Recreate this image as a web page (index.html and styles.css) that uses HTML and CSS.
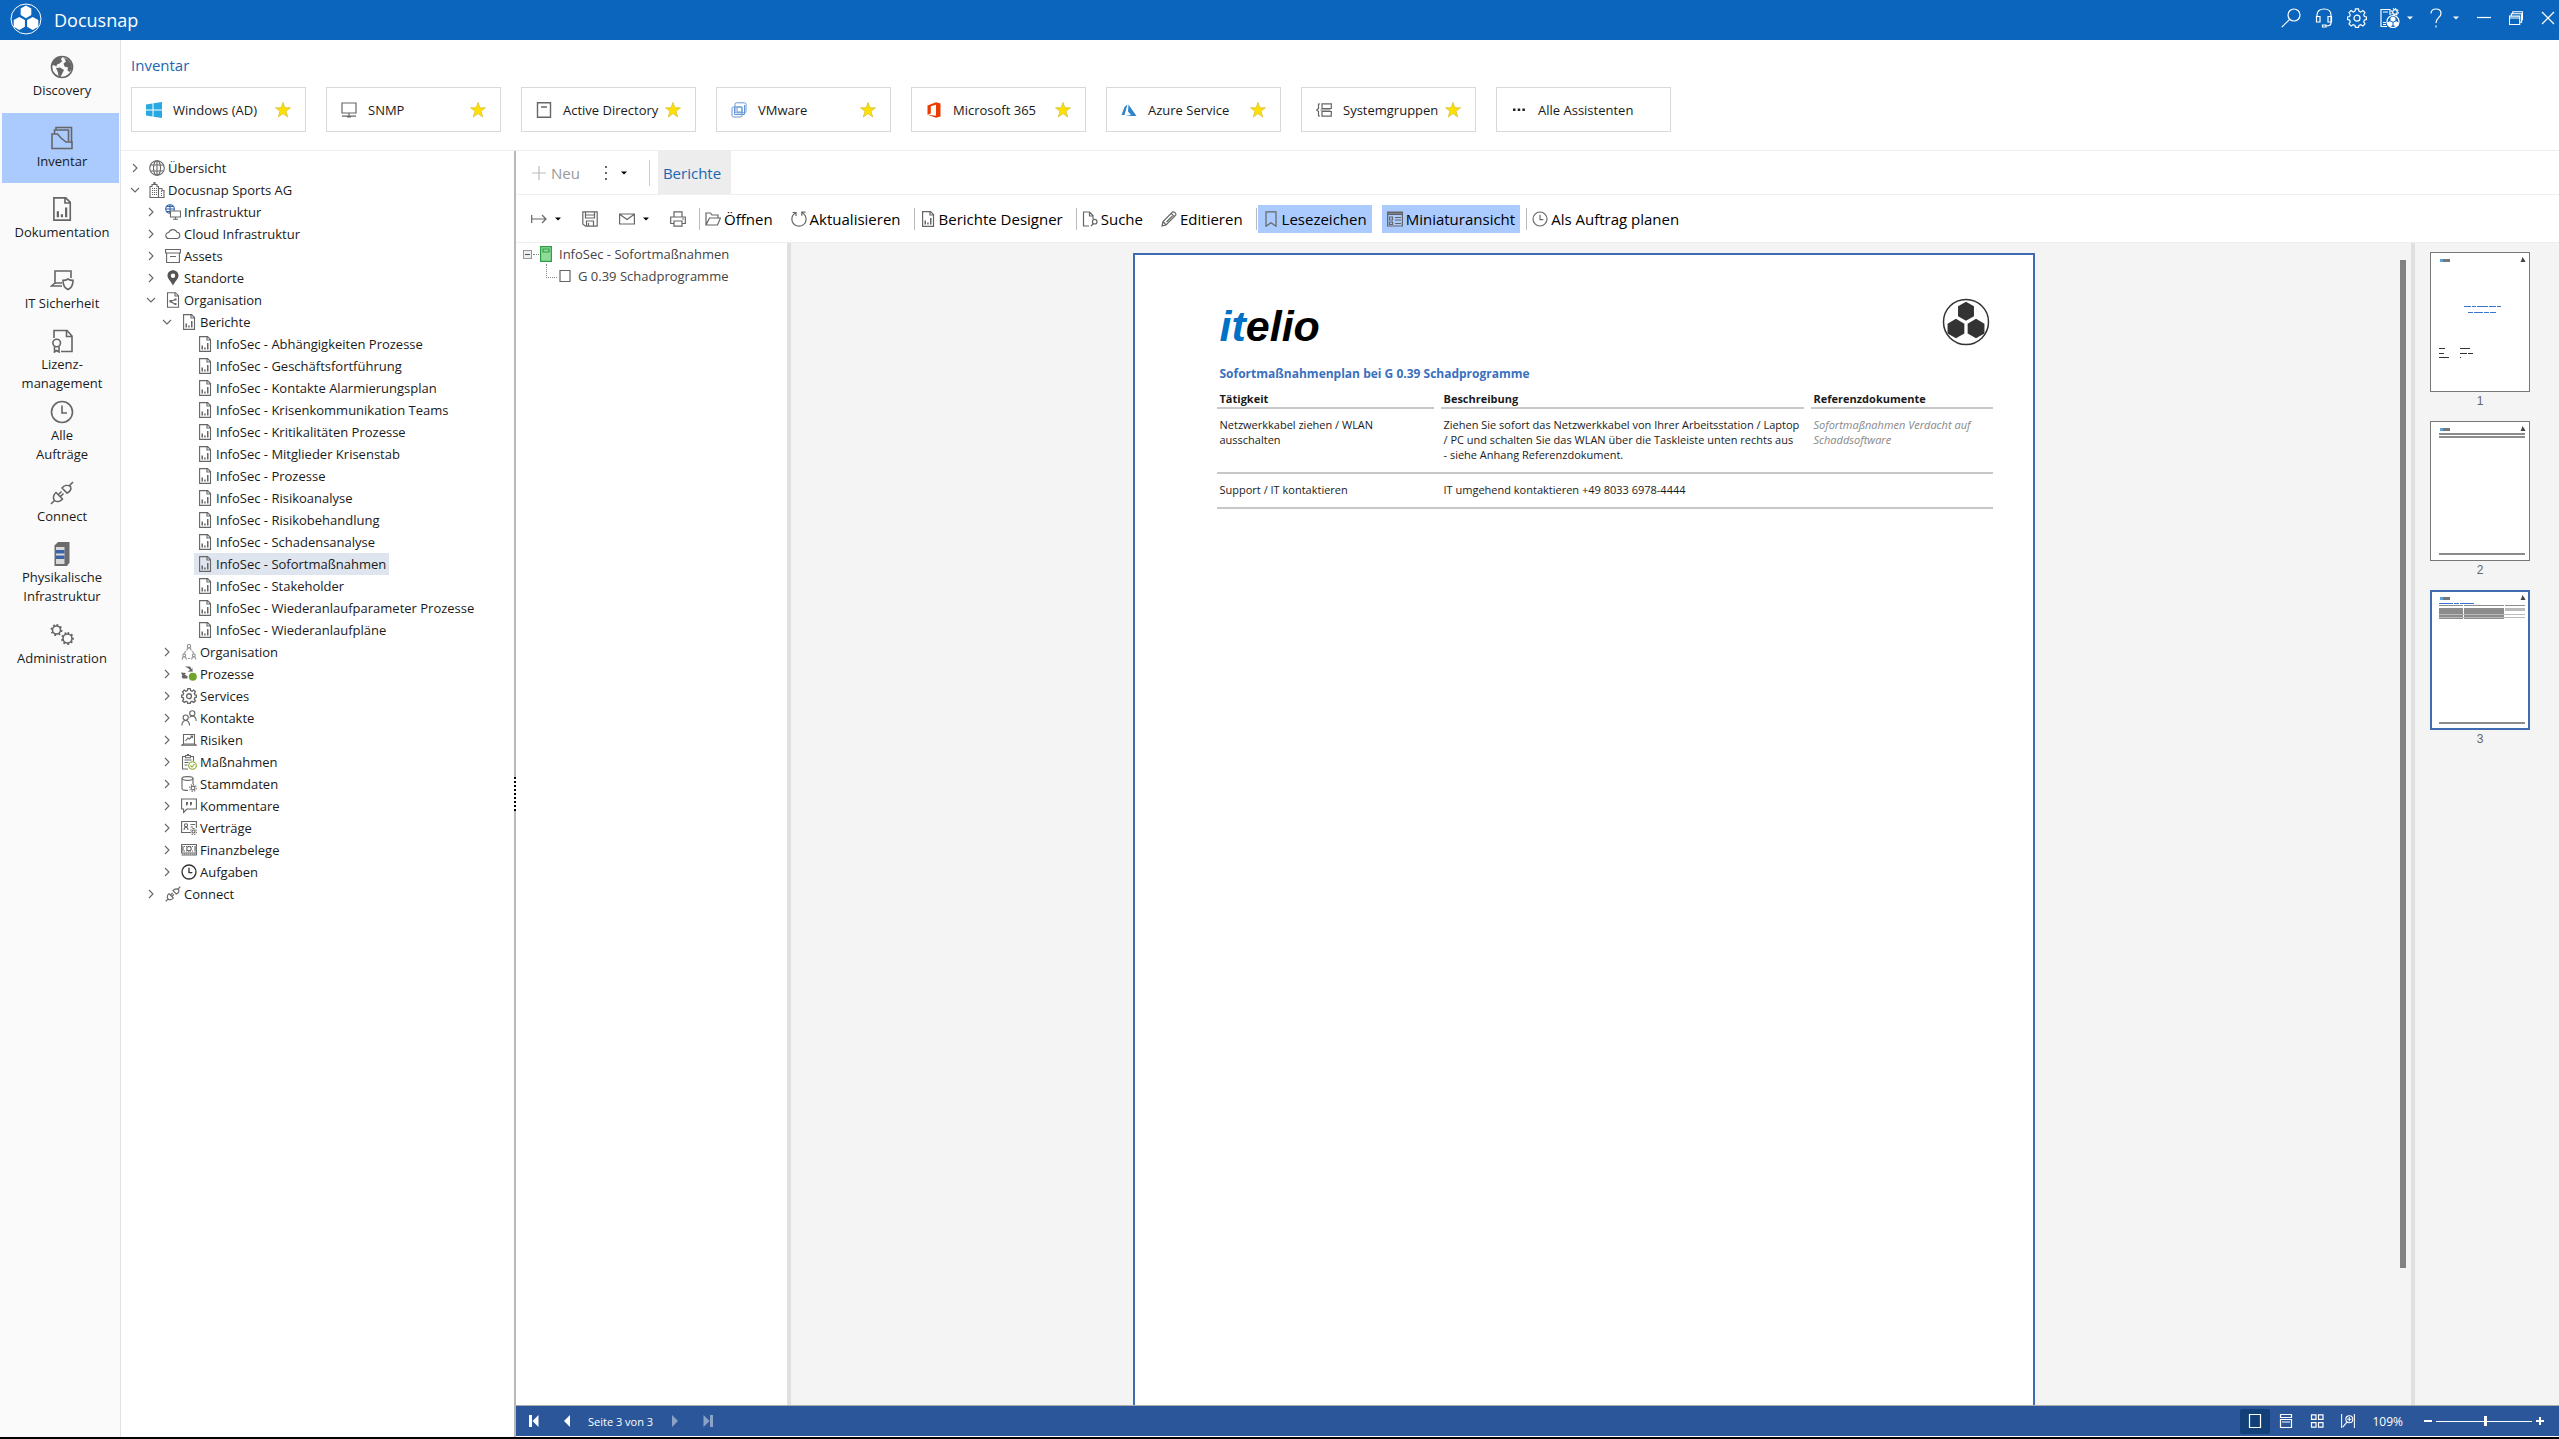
FILE: index.html
```html
<!DOCTYPE html>
<html lang="de">
<head>
    <meta charset="UTF-8">
    <meta name="viewport" content="width=device-width, initial-scale=1.0">
    <title>Docusnap</title>
    <link rel="stylesheet" href="styles.css">
</head>
<body>
    <!-- Icon sprite -->
    <svg class="sprite" aria-hidden="true">
        <symbol id="i-hex" viewBox="0 0 32 32"><circle cx="16" cy="16" r="15" fill="none" stroke="currentColor" stroke-width="1"/><path fill="currentColor" d="M16 2.500l5.300 3v6.600L16 15.200l-5.300-3.100V5.500zM9.300 13.900l5.600 3.200v6.600l-5.600 3.200-5.600-3.200v-6.600zM22.700 13.900l5.600 3.200v6.600l-5.600 3.200-5.600-3.200v-6.600z"/></symbol>
        <symbol id="i-chev" viewBox="0 0 10 10"><path d="M3 1l4 4-4 4"/></symbol>
        <symbol id="i-down" viewBox="0 0 10 10"><path d="M1 3l4 4 4-4"/></symbol>
        <symbol id="i-caret" viewBox="0 0 6 4"><path class="solid" d="M0 0.500h6L3 3.500z"/></symbol>
        <symbol id="i-star" viewBox="0 0 16 16"><path fill="#ffe000" stroke="#d8c13c" stroke-width=".8" d="M8 .5l1.900 5.300h5.600l-4.500 3.400 1.700 5.800L8 11.600 3.300 15 5 9.200.5 5.800h5.600z"/></symbol>
        <symbol id="i-earth" viewBox="0 0 24 24"><circle cx="12" cy="12" r="10.500"/><path class="solid" d="M3 6l4-3.500 5-.5-1 3 1.500 1-3 2.500L7 9.500l-.5 2L3.500 10l-1 1zM6 13l4-.5 4 2.500-1.500 3-2 4-2-.5-.5-4zM14 3l4 1.500L21.500 9l.5 5-2.500 3-2-1.500.5-3-3.500-1-1-3 2.500-2z"/></symbol>
        <symbol id="i-inv" viewBox="0 0 24 24"><path d="M4.500 8V4H6V1.500h15.500V17M6 4h12.500v11M4.500 8H2v14.500h20V16h-6l-5-4-3.500-4z"/></symbol>
        <symbol id="i-report" viewBox="0 0 16 16"><path d="M2.600.6h7.900l3 3v11.800H2.600zM10 .6v3.400h3.500"/><path class="solid" d="M4.500 9.500H6V13.500H4.500zM7.200 11.500h1.500v2H7.200zM10 7h1.500v6.500H10z"/></symbol>
        <symbol id="i-itsec" viewBox="0 0 24 24"><path d="M5 15V3h16v7M5 15l-3.500 3H12M5 15h7M18 11c1.500 1 3 1.400 5 1.400 0 5-1.500 7.500-5 9.100-3.500-1.600-5-4.100-5-9.100 2 0 3.500-.4 5-1.400z"/></symbol>
        <symbol id="i-lic" viewBox="0 0 24 24"><path d="M4 9V1.500h13L22 7v15.500H11M16.500 2v5.500H22M4.500 17.500V23l2-1.500L9 23v-5.500"/><circle cx="6.700" cy="14" r="3.800"/></symbol>
        <symbol id="i-clock" viewBox="0 0 24 24"><circle cx="12" cy="12" r="10.500"/><path d="M12 5.500v7.500h5"/></symbol>
        <symbol id="i-plug" viewBox="0 0 24 24"><path d="M1 23l3.500-3.500M19.500 4.500L23 1M12 7l5 5c2.500-1 4.800-3.500 3.500-6.500-3-2-6.500-1-8.500 1.500zM6 11.500l6.500 6.500c-2 2.500-5.500 3.500-8 1.500-2-2.500-1-6 1.500-8zM8.500 13.500l3-3M10.500 15.500l3-3"/></symbol>
        <symbol id="i-rack" viewBox="0 0 24 24"><path fill="#6b6b6b" stroke="none" d="M4.500 3.500L8 0h11.500v20.500L17 24H4.500z"/><path fill="#d9d9d9" stroke="none" d="M6 5h8.500v17H6z"/><path fill="#3c64a4" stroke="none" d="M6 8h8.500v3.500H6zM6 13.500h8.500V17H6z"/></symbol>
        <symbol id="i-gears" viewBox="0 0 24 24"><circle cx="6.500" cy="7" r="4"/><circle cx="17.500" cy="15.500" r="4.500"/><path stroke-width="2" stroke-dasharray="1.700 2.200" d="M6.500 2a5 5 0 1 1-.01 0zM17.500 10a5.500 5.500 0 1 1-.01 0z"/></symbol>
        <symbol id="i-globe" viewBox="0 0 16 16"><circle cx="8" cy="8" r="7.300"/><ellipse cx="8" cy="8" rx="3.500" ry="7.300"/><path d="M1.500 5h13M1.500 11h13M8 .7v14.600"/></symbol>
        <symbol id="i-city" viewBox="0 0 16 16"><path d="M1 15.500V4.500h2v-2h2V.5h1v2h2v2h1.500v11zM10 6.500h3v2h2v7h-5"/><path stroke-dasharray="1 1" d="M3.500 6v8M5.500 6v8M7.500 6v8M12.500 9v5"/></symbol>
        <symbol id="i-infra" viewBox="0 0 16 16"><g style="stroke:#2f62ad"><circle cx="5" cy="5" r="4.300"/><path d="M.7 5h8.600M5 .7v8.600M2 2.500h6M2 7.500h6"/></g><path fill="#fff" d="M5.500 7h10v6h-10z"/><path d="M10.500 13v2M8 15.300h5"/></symbol>
        <symbol id="i-cloud" viewBox="0 0 16 16"><path d="M4 12.500a3 3 0 0 1-.3-6 4.500 4.500 0 0 1 8.300-.3 3.200 3.200 0 0 1 .3 6.300z"/></symbol>
        <symbol id="i-box" viewBox="0 0 16 16"><path d="M.6 1.500h14.800V5H.6zM1.600 5v9.500h12.800V5M5 8.500h6"/></symbol>
        <symbol id="i-pin" viewBox="0 0 16 16"><path fill="#555" fill-rule="evenodd" stroke="none" d="M8 .3c3.200 0 5.500 2.300 5.500 5.200C13.500 9 10 11 8 15.800 6 11 2.500 9 2.500 5.500 2.500 2.600 4.800.3 8 .3zM8 3.500a2.200 2.200 0 1 0 0 4.400 2.200 2.200 0 0 0 0-4.400z"/></symbol>
        <symbol id="i-share" viewBox="0 0 16 16"><path d="M2.500.7h8l3 3v11.600h-11zM10 1v3h3M5.500 9.500l5-2M5.500 9.500l5 3"/><path class="solid" d="M4.500 8h2.500v2.500H4.500zM9.500 6.500h2v2h-2zM9.500 11h2v2h-2z"/></symbol>
        <symbol id="i-org" viewBox="0 0 16 16"><g opacity=".7"><circle cx="8" cy="2.200" r="1.700"/><path d="M5.700 6.500L6.700 4h2.600l1 2.500M1 15.500L2 13h2.500l1 2.500M10.500 15.500l1-2.500H14l1 2.500M5 7l-2 2.500M11 7l2 2.500M7 14.500h2"/><circle cx="3.200" cy="11.300" r="1.400"/><circle cx="12.800" cy="11.300" r="1.400"/></g></symbol>
        <symbol id="i-proc" viewBox="0 0 16 16"><path class="solid" d="M4 .5h5l2 3V.8l.8 4.700-5 .3L9 4 7.500 2.500zM0 6.500l5 .5-1.300 1.500L6 10H1.500zM.5 10h6v2.500h-5z"/><circle cx="11.800" cy="10.800" r="4" fill="#6fa52c" stroke="none"/></symbol>
        <symbol id="i-gear" viewBox="0 0 20 20"><path d="M8.500.8h3l.5 2.400 1.800.8 2.100-1.400L18 4.700l-1.300 2.100.7 1.700 2 .5v2.600l-2 .5-.7 1.800L18 16l-2.100 2.100-2.100-1.400-1.800.8-.5 1.900h-3L8 17.500l-1.800-.8-2.100 1.400L2 16l1.300-2.100-.7-1.800-2-.5V9l2-.5.7-1.700L2 4.700l2.100-2.100L6.200 4 8 3.200z"/><circle cx="10" cy="10.200" r="3"/></symbol>
        <symbol id="i-people" viewBox="0 0 16 16"><circle cx="11.300" cy="3.300" r="2.600"/><circle cx="4.700" cy="7.600" r="2.600"/><path d="M.8 15.500c.3-3.500 1.700-5 3.900-5s3.600 1.500 3.900 5M8.500 7.500c.7-1 1.700-1.500 2.800-1.500 2.200 0 3.600 1.500 4 5"/></symbol>
        <symbol id="i-risk" viewBox="0 0 16 16"><path d="M2.500 12V2.500h11V12M.5 13.300h15L13.500 12h-11zM4.500 9l2.500-3 1.500 1L11.500 4M9.500 4h2v2"/></symbol>
        <symbol id="i-clip" viewBox="0 0 16 16"><path d="M7 15H1.500V2.500h3v-1h2V.5h1v1h2v1h3V7M4.500 2.500v1.300h5V2.500M3.500 6h7M3.500 8.500h4M3.500 11h3"/><g style="stroke:#86ab1f"><circle cx="11.500" cy="11.500" r="3.800" fill="#fff"/><path d="M9.500 11.500l1.500 1.500 2.500-3"/></g></symbol>
        <symbol id="i-db" viewBox="0 0 16 16"><ellipse cx="6.500" cy="2.500" rx="5.500" ry="1.900"/><path d="M1 2.500v10c0 1.300 2 2 6 2M12 2.500V8"/><circle cx="12" cy="12" r="1.900"/><path stroke-dasharray="1.200 1.400" d="M12 8.600a3.400 3.400 0 1 1-.01 0z"/></symbol>
        <symbol id="i-comment" viewBox="0 0 16 16"><path d="M.6 1h14.800v10H6l-3.400 3.500V11h-2z"/><path class="solid" d="M5 4h2v2L6 7.500H5zM9 4h2v2l-1 1.500H9z"/></symbol>
        <symbol id="i-contract" viewBox="0 0 16 16"><path d="M9 12.500H.6V1.500h14.800V8M9.500 4.500H14M9.500 7H12M3 10c.2-2 .8-2.800 2-2.800S6.800 8 7 10"/><circle cx="5" cy="5.300" r="1.600"/><circle cx="12.500" cy="11.500" r="1.500"/><path stroke-dasharray="1.200 1.200" d="M12.500 8.500a3 3 0 1 1-.01 0z"/></symbol>
        <symbol id="i-money" viewBox="0 0 16 16"><path d="M.6 2.500h14.800V11H.6zM.6 13h14.800V11M2 4v5.500M14 4v5.500"/><circle cx="8" cy="6.700" r="2.200"/><path stroke-dasharray="1 1" d="M3 4.500h10M3 9h10M1 12h14"/></symbol>
        <symbol id="i-win" viewBox="0 0 16 16"><path fill="#29a9e1" stroke="none" d="M0 2.500l6.500-1v6H0zM7.500 1.300L16 0v7.500H7.500zM0 8.500h6.500v6L0 13.500zM7.500 8.500H16V16l-8.500-1.300z"/></symbol>
        <symbol id="i-pc" viewBox="0 0 16 16"><path d="M1 1h14v10H1zM8 11v3M1 14.200h14M6 15h4"/></symbol>
        <symbol id="i-dir" viewBox="0 0 16 16"><path stroke-width="1.400" d="M1.500.8h13v14.400h-13zM5 5h6"/></symbol>
        <symbol id="i-vm" viewBox="0 0 16 16"><g style="stroke:#6797d3;stroke-width:1"><rect x="4" y=".8" width="11" height="10" rx="1.500"/><rect x="1" y="5" width="10" height="10" rx="1.500"/><path d="M3.500 5v7.500h10V3"/><rect x="6" y="5" width="5" height="5"/></g></symbol>
        <symbol id="i-office" viewBox="0 0 16 16"><path fill="#eb3c00" stroke="none" d="M1.500 3.500L10 .2l4.500 1.300v13L10 15.800l-8.500-3.100 8.500 1V2.800L4.800 4.200v7.300l-3.300 1.200z"/></symbol>
        <symbol id="i-azure" viewBox="0 0 16 16"><path fill="#2f86c8" stroke="none" d="M6.500 2.500L3.500 5 .5 13h3zM7.500 2.500L15.500 14H4.500l5.500-1-3-3.500z"/></symbol>
        <symbol id="i-sysgrp" viewBox="0 0 16 16"><path d="M4 2H2.500v4.500L.7 8l1.800 1.500V14H4M6 1.800h9.300V6.500H6zM6 9.500h9.300v4.700H6zM4.500 8h10"/></symbol>
        <symbol id="i-dots" viewBox="0 0 16 16"><path fill="#222" stroke="none" d="M2 6.500h2.500V9H2zM6.700 6.500h2.500V9H6.700zM11.400 6.500h2.500V9h-2.500z"/></symbol>
        <symbol id="i-plus" viewBox="0 0 16 16"><path d="M8 1v14M1 8h14"/></symbol>
        <symbol id="i-vdots" viewBox="0 0 4 16"><path class="solid" d="M1 1h2v2H1zM1 7h2v2H1zM1 13h2v2H1z"/></symbol>
        <symbol id="i-export" viewBox="0 0 16 16"><path d="M.7 4v8M1 8h14M11 4l4 4-4 4"/></symbol>
        <symbol id="i-save" viewBox="0 0 16 16"><path d="M.8.8h14.400v14.400H3.500L.8 13zM3.500 1v6h9V1M4.500 15v-5h7v5M3.500 4h9M6.500 12v3"/></symbol>
        <symbol id="i-mail" viewBox="0 0 16 16"><path d="M.6 3h14.800v10H.6zM1 3.500l7 5 7-5"/></symbol>
        <symbol id="i-print" viewBox="0 0 16 16"><path d="M4 6V.8h8V6M4 12.500H.7V6h14.600v6.500H12M4 10h8v5.200H4zM12 8h2"/></symbol>
        <symbol id="i-open" viewBox="0 0 16 16"><path d="M1 14V2h4.500L7 4h6v3M1 14l3.500-7H15.500L12.500 14z"/></symbol>
        <symbol id="i-refresh" viewBox="0 0 16 16"><path d="M4.500 2A7 7 0 0 0 5.500 14.700M10.500 14.700A7 7 0 0 0 10.800 1.700M5 14.500q3 1.200 6 0M1.500 1.500h3.500V5M14.500 1.200h-3.700v3.500"/></symbol>
        <symbol id="i-find" viewBox="0 0 16 16"><path d="M7 15H1.500V1h6l3.500 3.500V8M7.500 1v4H11M9 15l2.500-2.500"/><circle cx="12.700" cy="10.700" r="2.300"/></symbol>
        <symbol id="i-edit" viewBox="0 0 16 16"><path d="M1 15l1-4.500L11.500 1c1.500-.8 4 1.500 3.200 3.200L5 14zM10.200 2.300l3.300 3.300M2 10.500L5 14M11.500 5l-6 6"/></symbol>
        <symbol id="i-mark" viewBox="0 0 12 16"><path d="M1 .8h10v14.400l-5-3.500-5 3.500z"/></symbol>
        <symbol id="i-mini" viewBox="0 0 16 16"><path d="M.6 1h14.800v14H.6zM1 3.500h14M8 6.500h6M8 9h6M8 12.500h6M2.500 6h3v3h-3zM2.500 11h3v2.500h-3zM1 2.200h14"/></symbol>
        <symbol id="i-search" viewBox="0 0 20 20"><circle cx="13" cy="7" r="6"/><path d="M8.500 11.500L.8 19.200"/></symbol>
        <symbol id="i-headset" viewBox="0 0 20 20"><path d="M3 9V7c0-4 3-6 7-6s7 2 7 6v8c0 2-2 3-5 3M2.500 8.500H6V14H2.500zM14 8.500h3.500V14H14zM8.500 17h3.500v2H8.500z"/></symbol>
        <symbol id="i-tool" viewBox="0 0 20 20"><path d="M7 18.500H1V1.500h9V7M3 4h5M3 14.500h3M3 16.500h3"/><circle cx="15" cy="4" r="2.300"/><path stroke-dasharray="1.300 1.300" d="M15 .6a3.400 3.400 0 1 1-.01 0z"/><circle cx="13" cy="13.500" r="6"/><path class="solid" d="M13 8.500l2.500 1.300v2.700L13 13.800l-2.500-1.300V9.800zM9.900 13.200l2.600 1.400v2.700L9.900 18.700l-2.600-1.400v-2.700zM16.100 13.200l2.600 1.400v2.700l-2.600 1.400-2.600-1.400v-2.700z"/></symbol>
        <symbol id="i-help" viewBox="0 0 12 20"><path d="M1 5.500C1 2.500 3 1 6 1s5 1.700 5 4.500C11 9.500 6 9.500 6 15M6 17.500v2"/></symbol>
        <symbol id="i-min" viewBox="0 0 14 14"><path d="M0 6.500h14"/></symbol>
        <symbol id="i-restore" viewBox="0 0 15 15"><path d="M.5 5.500h11v9H.5zM.5 7.500h11M2.500 5V3h11v9H12M4 3V.8h10.500V10"/></symbol>
        <symbol id="i-close" viewBox="0 0 14 14"><path d="M1 1l12 12M13 1L1 13"/></symbol>
        <symbol id="i-first" viewBox="0 0 12 12"><path class="solid" d="M1 0h3v12H1zM10.500 0v12L4.500 6z"/></symbol>
        <symbol id="i-prev" viewBox="0 0 12 12"><path class="solid" d="M9 0v12L3 6z"/></symbol>
        <symbol id="i-next" viewBox="0 0 12 12"><path class="solid" d="M3 0v12l6-6z"/></symbol>
        <symbol id="i-last" viewBox="0 0 12 12"><path class="solid" d="M8 0h3v12H8zM1.500 0v12l6-6z"/></symbol>
        <symbol id="i-v1" viewBox="0 0 14 14"><path d="M1.500.5h11v13h-11z"/></symbol>
        <symbol id="i-v2" viewBox="0 0 14 14"><path d="M1.500.5h11v3h-11zM1.500 5.500h11v8h-11zM3 8h8"/></symbol>
        <symbol id="i-v3" viewBox="0 0 14 14"><path d="M1.500.8H6v4.500H1.500zM8.500.8H13v4.500H8.500zM1.500 8.700H6v4.500H1.500zM8.500 8.700H13v4.500H8.500z"/></symbol>
        <symbol id="i-v4" viewBox="0 0 16 16"><path d="M.7 0v16M15.300 0v16M2 15l5-6M9.500 3.500v5M7 6h5"/><circle cx="9.500" cy="6" r="4"/></symbol>
        <symbol id="i-book" viewBox="0 0 12 16"><path fill="#8edc9a" stroke="#2f9e44" d="M.6.6h10.800v14.800H.6zM3 3h6v3H3z"/></symbol>
        <symbol id="i-sheet" viewBox="0 0 12 16"><path d="M1 2.500h10v11H1z"/></symbol>
        <symbol id="m-head" viewBox="0 0 98 138"><path stroke="#5aa3dc" stroke-width="3" d="M9 7.500h3"/><path stroke="#777" stroke-width="3" d="M12 7.500h7"/><path fill="#444" d="M91.500 4l2 3 1 2h-5l1-2z"/></symbol>
    </svg>

    <header class="titlebar">
        <svg class="logo"><use href="#i-hex"/></svg>
        <span class="app-name">Docusnap</span>
        <nav class="window-tools">
            <button aria-label="Suchen"><svg><use href="#i-search"/></svg></button>
            <button aria-label="Support"><svg><use href="#i-headset"/></svg></button>
            <button aria-label="Einstellungen"><svg><use href="#i-gear"/></svg></button>
            <button class="has-caret" aria-label="Werkzeuge"><svg><use href="#i-tool"/></svg><svg class="caret"><use href="#i-caret"/></svg></button>
            <button class="has-caret" aria-label="Hilfe"><svg><use href="#i-help"/></svg><svg class="caret"><use href="#i-caret"/></svg></button>
            <button class="win" aria-label="Minimieren"><svg><use href="#i-min"/></svg></button>
            <button class="win" aria-label="Verkleinern"><svg><use href="#i-restore"/></svg></button>
            <button class="win" aria-label="Schließen"><svg><use href="#i-close"/></svg></button>
        </nav>
    </header>

    <div class="app">
        <nav class="sidebar">
            <a href="#"><svg><use href="#i-earth"/></svg>Discovery</a>
            <a href="#" class="active"><svg><use href="#i-inv"/></svg>Inventar</a>
            <a href="#"><svg class="small-box"><use href="#i-report"/></svg>Dokumentation</a>
            <a href="#"><svg><use href="#i-itsec"/></svg>IT Sicherheit</a>
            <a href="#"><svg><use href="#i-lic"/></svg>Lizenz-<br>management</a>
            <a href="#"><svg><use href="#i-clock"/></svg>Alle<br>Aufträge</a>
            <a href="#"><svg><use href="#i-plug"/></svg>Connect</a>
            <a href="#"><svg><use href="#i-rack"/></svg>Physikalische<br>Infrastruktur</a>
            <a href="#"><svg><use href="#i-gears"/></svg>Administration</a>
        </nav>

        <main class="main">
            <section class="wizards">
                <h1>Inventar</h1>
                <div class="cards">
                    <button class="card"><svg><use href="#i-win"/></svg><span>Windows (AD)</span><svg class="star"><use href="#i-star"/></svg></button>
                    <button class="card"><svg><use href="#i-pc"/></svg><span>SNMP</span><svg class="star"><use href="#i-star"/></svg></button>
                    <button class="card"><svg><use href="#i-dir"/></svg><span>Active Directory</span><svg class="star"><use href="#i-star"/></svg></button>
                    <button class="card"><svg><use href="#i-vm"/></svg><span>VMware</span><svg class="star"><use href="#i-star"/></svg></button>
                    <button class="card"><svg><use href="#i-office"/></svg><span>Microsoft 365</span><svg class="star"><use href="#i-star"/></svg></button>
                    <button class="card"><svg><use href="#i-azure"/></svg><span>Azure Service</span><svg class="star"><use href="#i-star"/></svg></button>
                    <button class="card"><svg><use href="#i-sysgrp"/></svg><span>Systemgruppen</span><svg class="star"><use href="#i-star"/></svg></button>
                    <button class="card"><svg><use href="#i-dots"/></svg><span>Alle Assistenten</span></button>
                </div>
            </section>

            <div class="workspace">
                <aside class="tree-panel">
                    <ul class="tree">
                        <li><a href="#"><svg class="chev"><use href="#i-chev"/></svg><svg><use href="#i-globe"/></svg><span>Übersicht</span></a></li>
                        <li><a href="#"><svg class="chev"><use href="#i-down"/></svg><svg><use href="#i-city"/></svg><span>Docusnap Sports AG</span></a>
                            <ul>
                                <li><a href="#"><svg class="chev"><use href="#i-chev"/></svg><svg><use href="#i-infra"/></svg><span>Infrastruktur</span></a></li>
                                <li><a href="#"><svg class="chev"><use href="#i-chev"/></svg><svg><use href="#i-cloud"/></svg><span>Cloud Infrastruktur</span></a></li>
                                <li><a href="#"><svg class="chev"><use href="#i-chev"/></svg><svg><use href="#i-box"/></svg><span>Assets</span></a></li>
                                <li><a href="#"><svg class="chev"><use href="#i-chev"/></svg><svg><use href="#i-pin"/></svg><span>Standorte</span></a></li>
                                <li><a href="#"><svg class="chev"><use href="#i-down"/></svg><svg><use href="#i-share"/></svg><span>Organisation</span></a>
                                    <ul>
                                        <li><a href="#"><svg class="chev"><use href="#i-down"/></svg><svg><use href="#i-report"/></svg><span>Berichte</span></a>
                                            <ul class="reports">
                                                <li><a href="#"><svg><use href="#i-report"/></svg><span>InfoSec - Abhängigkeiten Prozesse</span></a></li>
                                                <li><a href="#"><svg><use href="#i-report"/></svg><span>InfoSec - Geschäftsfortführung</span></a></li>
                                                <li><a href="#"><svg><use href="#i-report"/></svg><span>InfoSec - Kontakte Alarmierungsplan</span></a></li>
                                                <li><a href="#"><svg><use href="#i-report"/></svg><span>InfoSec - Krisenkommunikation Teams</span></a></li>
                                                <li><a href="#"><svg><use href="#i-report"/></svg><span>InfoSec - Kritikalitäten Prozesse</span></a></li>
                                                <li><a href="#"><svg><use href="#i-report"/></svg><span>InfoSec - Mitglieder Krisenstab</span></a></li>
                                                <li><a href="#"><svg><use href="#i-report"/></svg><span>InfoSec - Prozesse</span></a></li>
                                                <li><a href="#"><svg><use href="#i-report"/></svg><span>InfoSec - Risikoanalyse</span></a></li>
                                                <li><a href="#"><svg><use href="#i-report"/></svg><span>InfoSec - Risikobehandlung</span></a></li>
                                                <li><a href="#"><svg><use href="#i-report"/></svg><span>InfoSec - Schadensanalyse</span></a></li>
                                                <li><a href="#" class="selected"><svg><use href="#i-report"/></svg><span>InfoSec - Sofortmaßnahmen</span></a></li>
                                                <li><a href="#"><svg><use href="#i-report"/></svg><span>InfoSec - Stakeholder</span></a></li>
                                                <li><a href="#"><svg><use href="#i-report"/></svg><span>InfoSec - Wiederanlaufparameter Prozesse</span></a></li>
                                                <li><a href="#"><svg><use href="#i-report"/></svg><span>InfoSec - Wiederanlaufpläne</span></a></li>
                                            </ul>
                                        </li>
                                        <li><a href="#"><svg class="chev"><use href="#i-chev"/></svg><svg><use href="#i-org"/></svg><span>Organisation</span></a></li>
                                        <li><a href="#"><svg class="chev"><use href="#i-chev"/></svg><svg><use href="#i-proc"/></svg><span>Prozesse</span></a></li>
                                        <li><a href="#"><svg class="chev"><use href="#i-chev"/></svg><svg class="large-box"><use href="#i-gear"/></svg><span>Services</span></a></li>
                                        <li><a href="#"><svg class="chev"><use href="#i-chev"/></svg><svg><use href="#i-people"/></svg><span>Kontakte</span></a></li>
                                        <li><a href="#"><svg class="chev"><use href="#i-chev"/></svg><svg><use href="#i-risk"/></svg><span>Risiken</span></a></li>
                                        <li><a href="#"><svg class="chev"><use href="#i-chev"/></svg><svg><use href="#i-clip"/></svg><span>Maßnahmen</span></a></li>
                                        <li><a href="#"><svg class="chev"><use href="#i-chev"/></svg><svg><use href="#i-db"/></svg><span>Stammdaten</span></a></li>
                                        <li><a href="#"><svg class="chev"><use href="#i-chev"/></svg><svg><use href="#i-comment"/></svg><span>Kommentare</span></a></li>
                                        <li><a href="#"><svg class="chev"><use href="#i-chev"/></svg><svg><use href="#i-contract"/></svg><span>Verträge</span></a></li>
                                        <li><a href="#"><svg class="chev"><use href="#i-chev"/></svg><svg><use href="#i-money"/></svg><span>Finanzbelege</span></a></li>
                                        <li><a href="#"><svg class="chev"><use href="#i-chev"/></svg><svg class="dark"><use href="#i-clock"/></svg><span>Aufgaben</span></a></li>
                                    </ul>
                                </li>
                                <li><a href="#"><svg class="chev"><use href="#i-chev"/></svg><svg class="large-box"><use href="#i-plug"/></svg><span>Connect</span></a></li>
                            </ul>
                        </li>
                    </ul>
                </aside>
                <div class="splitter"><span class="grip"></span></div>

                <section class="content">
                    <div class="tabs">
                        <button class="new" disabled><svg><use href="#i-plus"/></svg>Neu</button>
                        <button class="more" aria-label="Mehr"><svg class="vdots"><use href="#i-vdots"/></svg><svg class="caret"><use href="#i-caret"/></svg></button>
                        <span class="sep"></span>
                        <button class="tab">Berichte</button>
                    </div>

                    <div class="toolbar">
                        <div class="group icons">
                            <button aria-label="Exportieren"><svg><use href="#i-export"/></svg><svg class="caret"><use href="#i-caret"/></svg></button>
                            <button aria-label="Speichern"><svg><use href="#i-save"/></svg></button>
                            <button aria-label="Senden"><svg><use href="#i-mail"/></svg><svg class="caret"><use href="#i-caret"/></svg></button>
                            <button aria-label="Drucken"><svg><use href="#i-print"/></svg></button>
                        </div>
                        <div class="group">
                            <button><svg><use href="#i-open"/></svg>Öffnen</button>
                            <button><svg><use href="#i-refresh"/></svg>Aktualisieren</button>
                        </div>
                        <div class="group">
                            <button><svg><use href="#i-report"/></svg>Berichte Designer</button>
                        </div>
                        <div class="group">
                            <button><svg><use href="#i-find"/></svg>Suche</button>
                            <button><svg><use href="#i-edit"/></svg>Editieren</button>
                        </div>
                        <div class="group toggles">
                            <button aria-pressed="true"><svg><use href="#i-mark"/></svg>Lesezeichen</button>
                            <button aria-pressed="true"><svg><use href="#i-mini"/></svg>Miniaturansicht</button>
                        </div>
                        <div class="group">
                            <button><svg class="large-box"><use href="#i-clock"/></svg>Als Auftrag planen</button>
                        </div>
                    </div>

                    <div class="viewer">
                        <ul class="bookmarks">
                            <li><button class="expander" aria-label="Zuklappen"></button><span class="dotline"></span><svg><use href="#i-book"/></svg><span>InfoSec - Sofortmaßnahmen</span></li>
                            <li class="child"><span class="elbow"></span><svg><use href="#i-sheet"/></svg><span>G 0.39 Schadprogramme</span></li>
                        </ul>

                        <div class="canvas">
                            <article class="page">
                                <div class="page-head">
                                    <div class="itelio"><span>it</span>elio</div>
                                    <svg class="page-logo"><use href="#i-hex"/></svg>
                                </div>
                                <h2>Sofortmaßnahmenplan bei G 0.39 Schadprogramme</h2>
                                <table>
                                    <thead>
                                        <tr><th class="c-task"><span>Tätigkeit</span></th><th><span>Beschreibung</span></th><th class="c-ref"><span>Referenzdokumente</span></th></tr>
                                    </thead>
                                    <tbody>
                                        <tr><td>Netzwerkkabel ziehen / WLAN<br>ausschalten</td><td>Ziehen Sie sofort das Netzwerkkabel von Ihrer Arbeitsstation / Laptop<br>/ PC und schalten Sie das WLAN über die Taskleiste unten rechts aus<br>- siehe Anhang Referenzdokument.</td><td class="ref">Sofortmaßnahmen Verdacht auf<br>Schaddsoftware</td></tr>
                                        <tr><td>Support / IT kontaktieren</td><td>IT umgehend kontaktieren +49 8033 6978-4444</td><td></td></tr>
                                    </tbody>
                                </table>
                            </article>
                            <div class="scrollbar"><div class="scroll-thumb"></div></div>
                        </div>

                        <div class="thumbs">
                            <figure>
                                <svg class="thumb" viewBox="0 0 98 138">
                                    <use href="#m-head"/>
                                    <path stroke="#3a74cc" stroke-dasharray="7 1 4 1 11 1" d="M33 53.500h37"/>
                                    <path stroke="#3a74cc" stroke-dasharray="5 1 9 1" d="M37 59.500h28"/>
                                    <path stroke="#333" d="M8 95.500h6M29 95.500h10M8 100.500h5M29 100.500h7M37 100.500h5M8 104.500h10M29 104.500h1"/>
                                </svg>
                                <figcaption>1</figcaption>
                            </figure>
                            <figure>
                                <svg class="thumb" viewBox="0 0 98 138">
                                    <use href="#m-head"/>
                                    <path stroke="#8c8c8c" stroke-width="2" d="M8 12h86M8 15h86M8 132h86"/>
                                </svg>
                                <figcaption>2</figcaption>
                            </figure>
                            <figure class="current">
                                <svg class="thumb" viewBox="0 0 98 138">
                                    <use href="#m-head"/>
                                    <path stroke="#3a74cc" stroke-dasharray="14 1 5 1" d="M8 12.500h35"/>
                                    <path stroke="#8c8c8c" d="M8 14.500h24M33 14.500h40M74 14.500h20M8 27.500h24M33 27.500h40"/>
                                    <path fill="#8c8c8c" d="M8 17h24v6H8zM33 17h40v6H33zM8 24h24v2H8zM33 24h40v2H33z"/>
                                    <path fill="#bbb" d="M74 17h20v3H74zM8 23h86v1H8zM8 26h86v1H8z"/>
                                    <path stroke="#8c8c8c" stroke-width="2" d="M8 132h86"/>
                                </svg>
                                <figcaption>3</figcaption>
                            </figure>
                        </div>
                    </div>

                    <footer class="statusbar">
                        <button aria-label="Erste Seite"><svg><use href="#i-first"/></svg></button>
                        <button aria-label="Vorherige Seite"><svg><use href="#i-prev"/></svg></button>
                        <span class="page-no">Seite 3 von 3</span>
                        <button disabled aria-label="Nächste Seite"><svg><use href="#i-next"/></svg></button>
                        <button disabled aria-label="Letzte Seite"><svg><use href="#i-last"/></svg></button>
                        <div class="views">
                            <button class="on" aria-label="Einzelseite"><svg><use href="#i-v1"/></svg></button>
                            <button aria-label="Fortlaufend"><svg><use href="#i-v2"/></svg></button>
                            <button aria-label="Mehrere Seiten"><svg><use href="#i-v3"/></svg></button>
                            <button aria-label="Seitenbreite"><svg><use href="#i-v4"/></svg></button>
                        </div>
                        <label class="zoom-value" for="zoom">109%</label>
                        <button class="step minus" aria-label="Verkleinern"></button>
                        <input type="range" id="zoom" min="0" max="100" value="52">
                        <button class="step plus" aria-label="Vergrößern"></button>
                    </footer>
                </section>
            </div>
        </main>
    </div>
</body>
</html>
```

FILE: styles.css
```css
* {
    box-sizing: border-box;
}

body {
    margin: 0;
    height: 100vh;
    display: flex;
    flex-direction: column;
    border-bottom: 2px solid #000;
    background: #fff;
    color: #1a1a1a;
    font-family: "Open Sans", "Noto Sans", sans-serif;
    font-size: 13px;
    overflow: hidden;
}

button {
    display: flex;
    align-items: center;
    padding: 0;
    border: none;
    background: none;
    color: inherit;
    font: inherit;
    cursor: pointer;
}

a {
    color: inherit;
    text-decoration: none;
}

ul {
    list-style: none;
    margin: 0;
    padding: 0;
}

svg {
    width: 16px;
    height: 16px;
    flex: none;
    fill: none;
    stroke: #666;
    stroke-width: 1.2;
}

.solid {
    fill: var(--solid, #666);
    stroke: none;
}

.sprite {
    position: absolute;
    width: 0;
    height: 0;
}

svg.caret {
    width: 6px;
    height: 4px;
    --solid: #000;
}

/* Title bar */
.titlebar {
    flex: none;
    height: 40px;
    display: flex;
    align-items: center;
    padding: 0 4px 0 10px;
    background: #0c65bd;
    color: #fff;
}

.logo {
    width: 32px;
    height: 32px;
    color: #fff;
    stroke: none;
    margin-bottom: 3px;
}

.app-name {
    margin-left: 12px;
    font-size: 18px;
}

.window-tools {
    margin-left: auto;
    display: flex;
    align-items: center;
    gap: 13px;
    margin-bottom: 4px;
}

.window-tools,
.window-tools svg.caret,
.statusbar {
    --solid: #fff;
}

.window-tools svg {
    width: 20px;
    height: 20px;
    stroke: #fff;
}

.window-tools .has-caret {
    gap: 7px;
}

.window-tools svg.caret {
    width: 6px;
    height: 4px;
}

.window-tools .win {
    margin-left: 5px;
}

.window-tools .win svg {
    width: 14px;
    height: 14px;
}

/* Sidebar */
.app {
    flex: 1;
    min-height: 0;
    display: flex;
}

.sidebar {
    flex: none;
    width: 121px;
    padding: 2px 1px 0 2px;
    border-right: 1px solid #e2e2e2;
    background: #fafafa;
}

.sidebar a {
    height: 71px;
    display: flex;
    flex-direction: column;
    align-items: center;
    justify-content: center;
    padding-left: 3px;
    line-height: 19px;
    text-align: center;
    border-bottom: 1px solid #fafafa;
}

.sidebar svg {
    width: 24px;
    height: 24px;
    margin: 0 1px 2px 0;
    stroke-width: 1.6;
}

.sidebar .small-box {
    stroke-width: 1.1;
}

.sidebar .active {
    background: #abcafd;
}

/* Wizard cards */
.main {
    flex: 1;
    min-width: 0;
    display: flex;
    flex-direction: column;
}

.wizards {
    flex: none;
    padding: 13px 10px 18px;
    border-bottom: 1px solid #eee;
}

.wizards h1 {
    margin: 0 0 10px;
    font-size: 15px;
    font-weight: 400;
    line-height: 24px;
    color: #1a66b3;
}

.cards {
    display: flex;
    gap: 20px;
}

.card {
    width: 175px;
    height: 45px;
    padding: 0 14px;
    border: 1px solid #d9d9d9;
    background: #fff;
}

.card span {
    flex: 1;
    margin-left: 11px;
    text-align: left;
    white-space: nowrap;
}

/* Tree */
.workspace {
    flex: 1;
    min-height: 0;
    display: flex;
}

.tree-panel {
    flex: none;
    width: 393px;
    padding: 6px 8px;
}

.tree ul {
    padding-left: 16px;
}

.tree a {
    display: inline-flex;
    align-items: center;
    height: 22px;
    padding: 0 3px 0 1px;
    vertical-align: top;
    white-space: nowrap;
}

.tree li {
    line-height: 22px;
}

.tree a svg {
    margin: 0 3px 0 2px;
    stroke-width: 1.1;
}

.tree a .chev {
    width: 10px;
    height: 10px;
    margin: 0 7px 0 0;
}

.tree a .large-box,
.toolbar .large-box {
    stroke-width: 1.7;
}

.tree .dark {
    stroke: #333;
    stroke-width: 2;
}

.tree .reports {
    padding-left: 33px;
}

.tree .selected {
    background: #dfe5ee;
}

.splitter {
    flex: none;
    width: 2px;
    background: #b8b8b8;
    display: flex;
    align-items: center;
}

.grip {
    width: 2px;
    height: 34px;
    background: repeating-linear-gradient(#000 0 2px, #fff 2px 4px);
}

/* Content */
.content {
    flex: 1;
    min-width: 0;
    display: flex;
    flex-direction: column;
    font-size: 15px;
}

.tabs {
    flex: none;
    display: flex;
    align-items: center;
    height: 44px;
    padding-left: 15px;
    border-bottom: 1px solid #f0f0f0;
}

.tabs .new {
    gap: 4px;
    color: #999;
}

.new svg {
    stroke: #bbb;
}

.more {
    gap: 13px;
    margin-left: 24px;
}

.more .vdots {
    width: 4px;
    height: 16px;
}

.sep {
    width: 1px;
    height: 26px;
    margin: 0 8px 0 22px;
    background: #ccc;
}

.tab {
    align-self: stretch;
    padding: 0 10px 0 5px;
    background: #ededed;
    color: #1a66b3;
}

.toolbar {
    flex: none;
    display: flex;
    align-items: center;
    height: 48px;
    padding-left: 15px;
    border-bottom: 1px solid #eee;
    color: #000;
}

.group {
    display: flex;
    align-items: center;
    gap: 18px;
    margin-right: 13px;
}

.group + .group {
    padding-left: 6px;
    background: linear-gradient(#bbb, #bbb) left center / 1px 22px no-repeat;
}

.group button {
    height: 28px;
    gap: 3px;
    white-space: nowrap;
}

.group.icons {
    gap: 21px;
}

.icons button {
    gap: 8px;
}

.toolbar .toggles {
    gap: 10px;
    margin-right: 6px;
    padding-left: 2px;
}

.toggles button {
    padding: 0 5px;
    background: #abcafd;
}

/* Report viewer */
.viewer {
    flex: 1;
    min-height: 0;
    display: flex;
    background: #f4f4f4;
    border-bottom: 1px solid #aaa;
}

.bookmarks {
    flex: none;
    width: 275px;
    background: #fff;
    border-right: 4px solid #e0e0e0;
    font-size: 13px;
    color: #444;
}

.bookmarks li {
    display: flex;
    align-items: center;
    height: 22px;
    padding-left: 7px;
}

.bookmarks svg {
    width: 12px;
    margin-right: 7px;
}

.expander {
    width: 9px;
    height: 9px;
    border: 1px solid #999;
    background: linear-gradient(#456, #456) center / 5px 1px no-repeat #eee;
}

.dotline {
    width: 6px;
    margin: 0 1px;
    border-top: 1px dotted #888;
}

.bookmarks .child {
    padding-left: 30px;
}

.elbow {
    width: 11px;
    height: 14px;
    margin: 0 2px 11px 0;
    border-left: 1px dotted #888;
    border-bottom: 1px dotted #888;
}

.canvas {
    flex: 1;
    min-width: 0;
    display: flex;
    overflow: hidden;
}

.page {
    flex: none;
    width: 902px;
    height: 1276px;
    margin: 10px auto 0;
    padding: 43px 40px 0 82px;
    border: 2px solid #3f6cb0;
    background: #fff;
    font-size: 11px;
    line-height: 15px;
}

.page-head {
    display: flex;
    justify-content: space-between;
    padding: 0 3px;
}

.itelio {
    padding-top: 3px;
    font: italic bold 43px/50px "Liberation Sans", Arial, sans-serif;
    color: #000;
}

.itelio span {
    color: #0072c6;
}

.page-logo {
    width: 48px;
    height: 48px;
    color: #333;
    stroke: none;
}

.page h2 {
    margin: 14px 3px 8px;
    font-size: 12px;
    line-height: 18px;
    color: #3a70be;
}

.page table {
    width: 100%;
    border-collapse: collapse;
    table-layout: fixed;
    white-space: nowrap;
}

.page th {
    padding: 0 7px 0 0;
    text-align: left;
}

.page th:last-child {
    padding-right: 0;
}

.page th span {
    display: block;
    padding: 0 3px 1px;
    border-bottom: 2px solid #c8c8c8;
}

.c-task {
    width: 224px;
}

.c-ref {
    width: 182px;
}

.page td {
    padding: 8px 3px 10px;
    vertical-align: top;
    border-bottom: 2px solid #c8c8c8;
}

.page .ref {
    font-style: italic;
    color: #888;
}

.scrollbar {
    flex: none;
    width: 11px;
    margin-left: 24px;
    padding-top: 17px;
}

.scroll-thumb {
    width: 6px;
    height: 88%;
    background: #828282;
}

.thumbs {
    flex: none;
    width: 148px;
    padding: 9px 0 0 15px;
    border-left: 4px solid #e0e0e0;
}

.thumbs figure {
    width: 100px;
    margin: 0 0 10px;
    font: 12px/19px "Liberation Sans", Arial, sans-serif;
    color: #666;
    text-align: center;
}

.thumb {
    display: block;
    width: 100px;
    height: 140px;
    border: 1px solid #777;
    background: #fff;
    stroke: none;
}

.current .thumb {
    border-color: #3f6cb0;
    outline: 1px solid #3f6cb0;
    outline-offset: -2px;
}

/* Status bar */
.statusbar {
    flex: none;
    height: 31px;
    display: flex;
    align-items: center;
    padding: 0 15px 0 12px;
    border-bottom: 1px solid #fff;
    background: #2b579a;
    color: #fff;
    font-size: 12px;
}

.statusbar button {
    margin-right: 21px;
}

.statusbar svg {
    width: 12px;
    height: 12px;
    stroke: #fff;
}

.page-no {
    margin: 0 16px 0 -6px;
    font-size: 11px;
}

.statusbar button:disabled {
    opacity: .45;
}

.statusbar .views {
    display: flex;
    gap: 1px;
    margin-left: auto;
}

.statusbar .views button {
    width: 30px;
    height: 25px;
    justify-content: center;
    margin: 0;
    border-radius: 2px;
}

.views svg {
    width: 14px;
    height: 14px;
}

.statusbar .views .on {
    background: #124078;
}

.zoom-value {
    margin: 0 21px 0 9px;
}

.statusbar .step {
    width: 8px;
    height: 8px;
    margin: 0;
    background: linear-gradient(#fff, #fff) center / 8px 2px no-repeat;
}

.statusbar .plus {
    background: linear-gradient(#fff, #fff) center / 8px 2px no-repeat, linear-gradient(#fff, #fff) center / 2px 8px no-repeat;
}

#zoom {
    appearance: none;
    width: 96px;
    height: 12px;
    margin: 0 4px;
    background: linear-gradient(#fff, #fff) center / 100% 1px no-repeat;
}

#zoom::-webkit-slider-thumb {
    appearance: none;
    width: 3px;
    height: 10px;
    background: #fff;
}
```
